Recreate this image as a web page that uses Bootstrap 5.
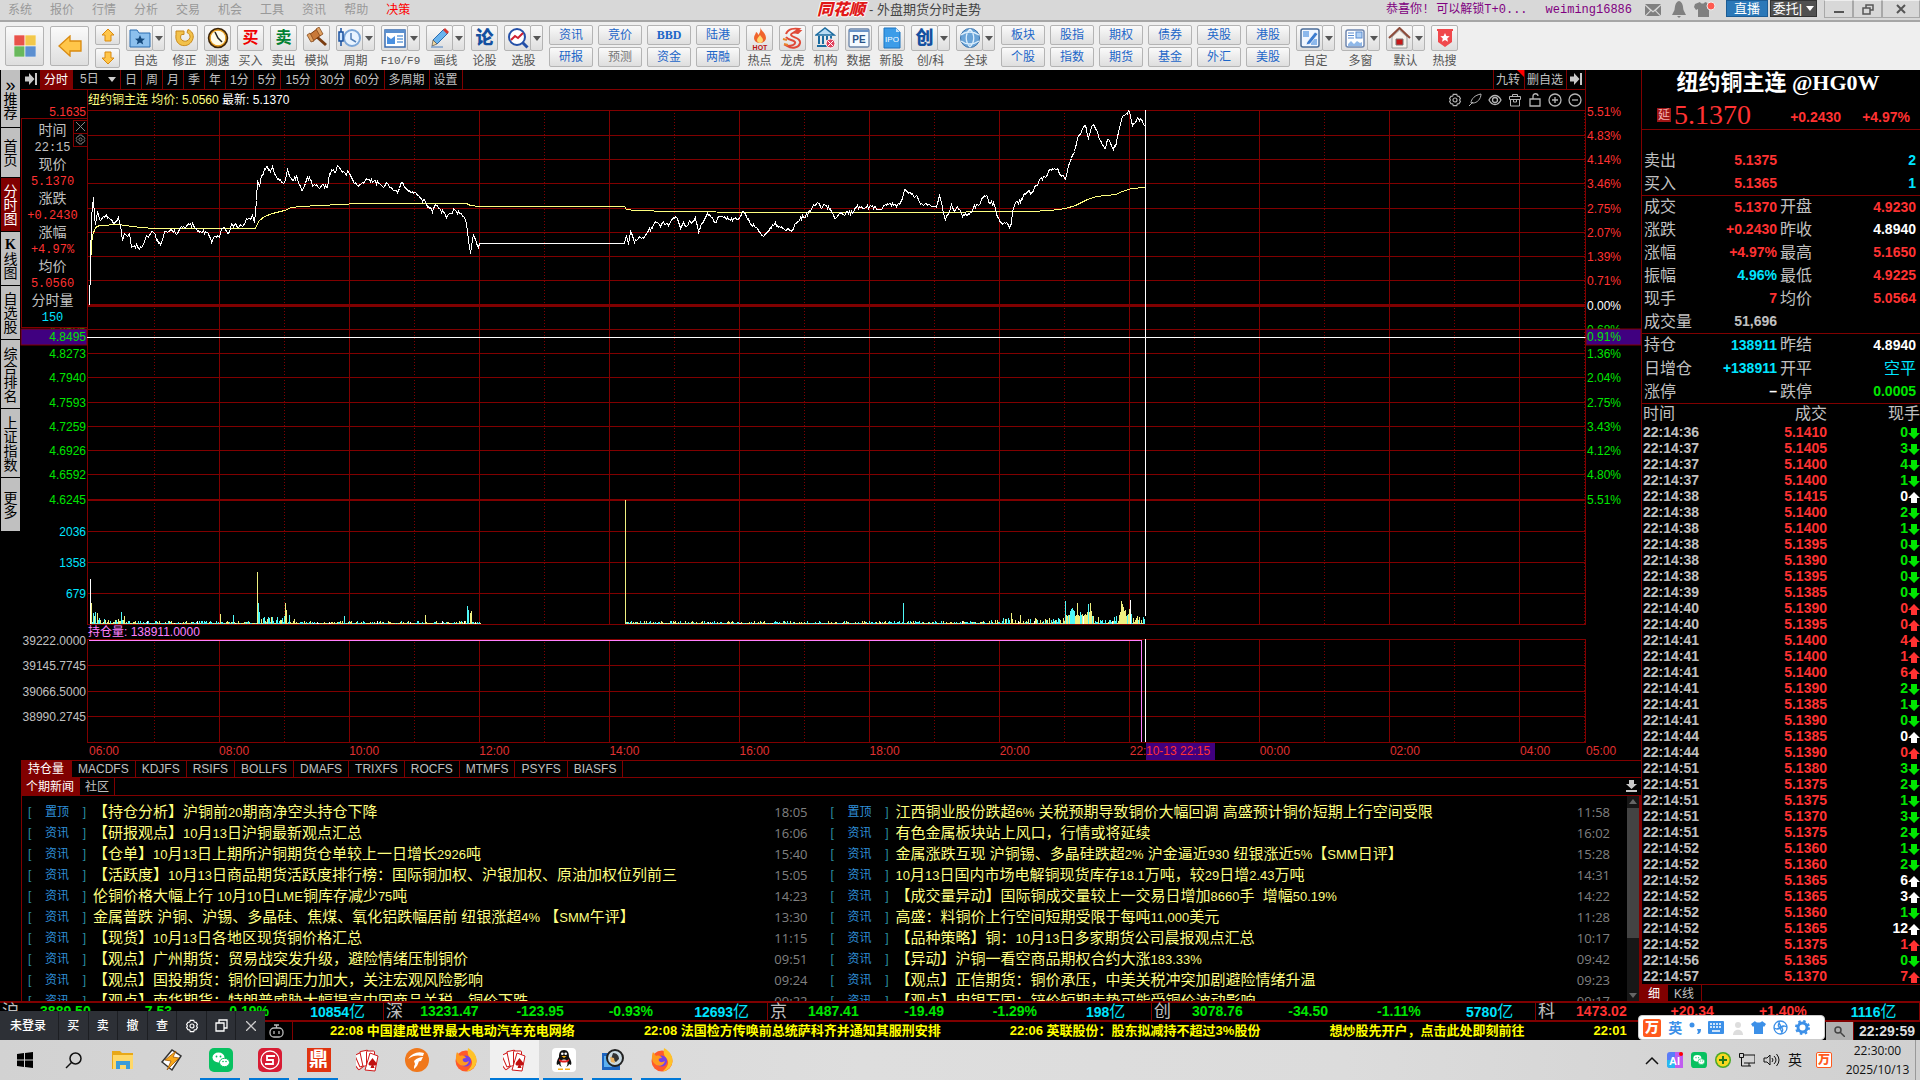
<!DOCTYPE html>
<html lang="zh-CN">
<head>
<meta charset="utf-8">
<meta name="viewport" content="width=device-width, initial-scale=1">
<title>外盘期货分时走势</title>
<link href="https://cdn.jsdelivr.net/npm/bootstrap@5.3.0/dist/css/bootstrap.min.css" rel="stylesheet">
<style>
:root{--line:#800000;--up:#ff3232;--down:#00e600;--cy:#00e5ff;--tx:#c0c0c0}
body{height:100vh;overflow:hidden;background:#000;color:var(--tx);font-family:"Liberation Sans","Noto Sans CJK SC",sans-serif;font-size:12px;line-height:16px}
a{text-decoration:none;color:inherit}
button{font:inherit;color:inherit;background:none;border:0;padding:0;line-height:inherit}
svg{display:block;flex:none}
.up{color:var(--up)}.dn{color:var(--down)}.cy{color:var(--cy)}.wh{color:#fff}
/* title bar */
.titlebar{height:22px;background:#d8d8d8;border-bottom:2px solid #a6a6a6;color:#999;position:relative}
.titlebar .menu{gap:18px;padding-left:8px;line-height:20px}
.caption{left:817px;top:1px;gap:4px;color:#444;font-size:13px;line-height:18px}
.brand{font-weight:900;font-style:italic;font-size:16px;color:#e01818;line-height:18px;text-shadow:1px 0 #fff,-1px 0 #fff,0 1px #fff,0 -1px #fff}
.account{color:#800080;font-family:"Liberation Mono","Noto Sans CJK SC",monospace;gap:18px;line-height:20px}
.btns{gap:2px}
.live{width:42px;height:17px;background:#2b78b8;color:#fff;border:1px solid #1c5c94;font-size:13px;line-height:14px}
.trade{width:47px;height:17px;background:#505050;color:#fff;border:1px solid #333;font-size:13px;line-height:14px;white-space:nowrap}
.winctl{margin-left:5px}
.winctl button{height:18px;border:1px solid #a8a8a8;border-top-color:#eee;display:flex;align-items:center;justify-content:center}
/* toolbar */
.toolbar{height:48px;background:#efefef;padding:3px 5px 0;gap:6px;color:#555}
.tb{border:1px solid #b4b4b4;background:linear-gradient(#fafafa,#dedede);border-radius:2px;display:flex;align-items:center;justify-content:center}
.tool{width:27px}.tool.wide{width:39px}
.tool .tb{height:26px;width:27px}
.tool .drop{width:13px;margin-left:-1px}
.tool .drop::after,.tri{content:"";border:4px solid transparent;border-top:5px solid #555;border-bottom:0}
.tool span.cap{line-height:16px;white-space:nowrap;margin-top:2px}
.big{width:39px;height:40px;margin-top:1px}
.half{width:25px;height:20px}
.pills{display:grid;grid-template-rows:20px 20px;grid-auto-flow:column;gap:2px 5px}
.pills .tb{width:44px;height:20px;color:#1c66c8}
.glyph{font-weight:700;font-size:18px;line-height:22px}
/* side navigation */
.side{width:21px;padding-left:1px;background:#000}
.side a{background:#c0c0c0;color:#000;font-size:14px;line-height:14px;margin-bottom:1px;display:flex;flex-direction:column;align-items:center;justify-content:center;width:19px;height:53px;padding-top:2px}
.side a.s2{height:49px}.side a.s4{height:68px}.side a.first{height:57px}
.side a.on{background:var(--line);color:#fff}
/* period tabs */
.strip a,.strip button{border-right:1px solid var(--line);color:var(--tx);white-space:nowrap}
.strip .on{background:var(--line);color:#fff}
.periods{height:20px;border-bottom:1px solid var(--line);line-height:20px}
.periods a{padding:0 4px;height:19px}
.periods .p5{width:48px;padding:0 4px 0 7px;display:flex;align-items:center;justify-content:space-between}
.legendrow{height:20px;margin-left:66px;border-left:1px solid var(--line);line-height:18px;margin-right:55px;border-right:1px solid var(--line)}
.legendrow .tools{gap:6px;padding-right:3px}
.rightedge{margin-right:55px;border-right:1px solid var(--line)}
.plotwrap{height:633px}
.plotwrap svg.axis{overflow:visible}
.times{height:17px;color:#e03030;margin-left:68px;line-height:17px}
.times span{flex:130 1 0}.times .halfcell{flex:66 1 0}.times .lastcell{flex:none;width:55px}
.stamp{background:#400080;color:#ff3232;left:1125px;top:673px;width:69px;height:17px;line-height:17px}
.indic{height:17px;border-top:1px solid var(--line);line-height:16px}
.indic a{padding:0 6px}
.indic a.on{padding:0 7px}
.newstabs{height:19px;border-top:1px solid var(--line);border-bottom:1px solid var(--line);line-height:18px}
.newstabs a{padding:0 5px}
/* cursor read-out */
.readout{left:0;top:48px;width:67px;height:210px;border:1px solid var(--line);background:#000;font-size:14px;line-height:17px;padding-top:3px;text-align:center;padding-right:4px}
.readout b{display:block;font-weight:400;font-family:"Liberation Mono",monospace;font-size:12px;line-height:18px;height:17px}
.readout .x{right:-1px;width:15px;height:14px;border:1px solid var(--line);display:flex;align-items:center;justify-content:center}
/* news */
.news{border-left:1px solid var(--line);border-right:2px solid var(--line)}
.newscol{width:50%;padding:5px 17px 0 6px}
.item{height:21px;line-height:21px;color:#ffff80;white-space:pre}
.item .tag{color:#2f8fd8;width:65px;display:flex;justify-content:space-between;padding-right:7px;line-height:23px}
.item .tag i{font-style:normal;color:#2a8fa0}
.item a{font-size:15px;color:#ffff80}
.item a i{font-style:normal;font-size:13px}
.item time{color:#808080;font-size:13px;line-height:23px;font-family:"Open Sans",sans-serif}
.sbar{width:12px;background:#171717}
.sbar .thumb{height:130px;background:#434343}
.arr{height:12px;display:flex;align-items:center;justify-content:center}
/* quote panel */
.quote{width:279px;border-left:1px solid var(--line)}
.qname{font:700 22px/26px "Liberation Serif","Noto Sans CJK SC",serif;color:#fff;padding-right:6px}
.qtop{height:60px;border-bottom:1px solid var(--line)}
.qline{padding:4px 0 0 15px}
.late{width:14px;height:14px;background:#a01414;color:#f4b0b0;font-size:12px;line-height:14px;text-align:center}
.last{font:28px/30px "Liberation Serif",serif}
.num{font-size:14px;font-weight:700}
.qline .num{padding-top:4px}
.spacer{height:20px}
.book td{padding:0;height:23px;line-height:23px;font-size:16px}
.book td:nth-child(even){font-size:14px;font-weight:700;text-align:right}
.book td:first-child{width:54px;padding-left:2px}.book td:nth-child(2){width:81px}.book td:nth-child(3){padding-left:3px}.book td:nth-child(4){padding-right:4px}
.book tr.ruled td{border-top:1px solid var(--line);line-height:22px}
.book td.thin{font-size:16px;font-weight:400}
.ticks td{padding:0;height:16px;line-height:16px;font-size:14px;font-weight:700}
.ticks th{padding:0;height:21px;line-height:20px;font-size:16px;font-weight:400}
.ticks tr>:first-child{padding-left:1px;width:100px}.ticks tr>:nth-child(2){text-align:right;width:85px}.ticks tr>:nth-child(3){text-align:right}
.ticks svg{display:inline-block;vertical-align:-2px}
.qtabs{height:17px;border-top:1px solid var(--line);line-height:18px}
.qtabs a{padding:0 7px 0 6px}
/* bottom strips */
.indices{height:21px;border-top:2px solid var(--line);border-bottom:2px solid var(--line);line-height:17px;font-size:14px;font-weight:700}
.indices .seg{border-right:1px solid var(--line);flex:1 1 0}
.indices .nm{width:20px;font-size:17px;font-weight:400;padding-left:2px}
.indices .unit{font-weight:400;font-size:16px}
.wire{height:18px;line-height:18px;color:#ffff00;font-weight:700;font-size:13px;gap:69px;white-space:nowrap;padding-left:330px}
.login{left:0;bottom:40px;height:29px;width:265px;background:#2d3036;color:#fff;font-weight:500}
.login button{flex:1 1 0;border-right:1px solid #1c1e22;display:flex;align-items:center;justify-content:center}
.login button:first-child{flex:0 0 59px;padding-right:2px}
.robot{left:268px;bottom:40px;width:25px;height:18px;border-right:1px solid var(--line)}
.ime{right:95px;bottom:40px;width:187px;height:25px;background:#fff;border:1px solid #ccc;border-radius:4px;color:#3c90e8;font-weight:700;padding:0 14px 0 4px}
.wan{width:18px;height:18px;background:#ff5a1e;color:#fff;font-weight:900;font-size:14px;line-height:17px;text-align:center;border-radius:2px}
.corner{right:0;bottom:40px;height:19px;background:#000;color:#ddd;font-size:14px;font-weight:700;line-height:19px;border-top:1px solid var(--line)}
.corner .find{width:28px;background:#b0b0b0;border-right:1px solid var(--line)}
.taskbar{height:40px;background:linear-gradient(90deg,#d2d2d2,#dedede 45%,#dcdcdc 70%,#d0d0d0);color:#111}
.task{width:49px;height:40px;display:flex;align-items:center;justify-content:center;position:relative}
.task.run::after{content:"";position:absolute;bottom:0;left:4px;right:5px;height:2px;background:#0078d7}
.task.cur{background:#f0f0f0}.task.cur::after{left:0;right:0}
.tray{gap:8px}
.tray .clock{font:12px/19px "Open Sans",sans-serif;width:67px;text-align:center;margin:0 -4px 0 4px}
.sliver{width:5px;height:40px;border-left:1px solid #999}
</style>
<script src="https://cdn.jsdelivr.net/npm/bootstrap@5.3.0/dist/js/bootstrap.bundle.min.js"></script>
</head>
<body class="d-flex flex-column">
<svg width="0" height="0" class="position-absolute">
 <symbol id="gear" viewBox="0 0 16 16"><g fill="none" stroke="currentColor" stroke-width="1.3"><path d="M6 1.5h4l.6 2 2 .3 1.6 2.6-1 1.6 1 1.6-1.6 2.6-2 .3-.6 2H6l-.6-2-2-.3L1.800 9.600l1-1.600-1-1.600L3.400 3.800l2-.3z"/><circle cx="8" cy="8" r="2.300"/></g></symbol>
 <symbol id="end" viewBox="0 0 12 12"><path d="M0 3.500h4V0l5.500 6L4 12V8.500H0zM10 0h2v12h-2z" fill="#c8c8c8"/></symbol>
 <symbol id="bag" viewBox="0 0 24 24"><rect width="24" height="24" rx="5" fill="#07c160"/><ellipse cx="9.500" cy="9.500" rx="6" ry="5" fill="#fff"/><ellipse cx="15.500" cy="14.500" rx="5" ry="4.200" fill="#fff" stroke="#07c160"/><g fill="#07c160"><circle cx="7.500" cy="8.500" r=".9"/><circle cx="11.500" cy="8.500" r=".9"/><circle cx="14" cy="13.500" r=".8"/><circle cx="17" cy="13.500" r=".8"/></g></symbol>
 <symbol id="cards" viewBox="0 0 24 24"><g fill="#fff" stroke="#d01818" stroke-width="1"><rect x="1.500" y="6" width="7" height="12" rx="1" transform="rotate(-38 8 18)"/><rect x="4" y="4" width="7" height="13" rx="1" transform="rotate(-24 9 18)"/><rect x="7" y="2.500" width="8" height="15" rx="1" transform="rotate(-12 11 18)"/><rect x="10.500" y="3" width="8" height="17" rx="1"/><path d="M14 5l8 3-3 15-10-1z"/></g><path d="M16.500 10c2 3 4 4 4 6 0 1.500-2 2-3 1l1 3h-4l1-3c-1 1-3 .5-3-1 0-2 2-3 4-6z" fill="#c01010"/></symbol>
 <symbol id="fox" viewBox="0 0 24 24"><circle cx="12" cy="13" r="10.500" fill="#ff5a2a"/><path d="M14 0c7 4 9 9 8.500 14-1 6-6 9-10 9.500C18 19 20 14 16 10c-2-2-3-6-2-10z" fill="#ffc229"/><circle cx="11.500" cy="13" r="5.500" fill="#7542e5"/><path d="M3 4l3 4c3-1 5 0 6 2-3 0-4 1-3 3 2 2 4 1 6 0-1 5-7 6-10 3C2 14 1 9 3 4z" fill="#ff9a1f"/></symbol>
</svg>

<header class="titlebar d-flex justify-content-between">
 <nav class="menu d-flex"><a href="#">系统</a><a href="#">报价</a><a href="#">行情</a><a href="#">分析</a><a href="#">交易</a><a href="#">机会</a><a href="#">工具</a><a href="#">资讯</a><a href="#">帮助</a><a href="#" class="text-danger-emphasis" id="decide">决策</a></nav>
 <div class="caption position-absolute d-flex"><span class="brand">同花顺</span><span>- 外盘期货分时走势</span></div>
 <div class="btns d-flex align-items-start">
  <div class="account d-flex me-2"><span>恭喜你! 可以解锁T+0...</span><span>weiming16886</span></div>
  <svg width="74" height="19" viewBox="0 0 74 19" class="me-2"><g fill="#808080"><path d="M3 4h16l-8 7zM3 5.500l5 5-5 5zM19 5.500l-5 5 5 5zM4 16l5-5 2 1.500 2-1.500 5 5z"/><path d="M37 1c4 1 4 6 4.500 9L44 15H30l2.500-5c.5-3 .5-8 4.500-9zM35 16h4l-2 2z"/><path d="M53 4l5-2c1 2 4 2 5 0l5 2 3 4-3 2-1-1v8H56V9l-2 1-2-3z"/></g><circle cx="69" cy="6" r="4" fill="#ff5a50" stroke="#eee"/></svg>
  <button class="live">直播</button>
  <button class="trade d-flex align-items-center justify-content-center">委托|<i class="tri ms-1" style="border-top-color:#fff"></i></button>
  <div class="winctl d-flex"><button style="width:29px"><svg width="10" height="10"><path d="M0 7h10v2H0z" fill="#555"/></svg></button><button style="width:29px"><svg width="12" height="11" fill="none" stroke="#555" stroke-width="1.500"><path d="M4 4V1h7v5H8M1 4h7v6H1z"/></svg></button><button style="width:38px"><svg width="10" height="10" stroke="#555" stroke-width="2"><path d="M1 1l8 8M9 1L1 9"/></svg></button></div>
 </div>
</header>

<div class="toolbar d-flex align-items-start">
 <button class="tb big"><svg width="22" height="22" viewBox="0 0 22 22" stroke="#fff" stroke-width=".6"><path d="M0 0h11v11H0z" fill="#e8524a"/><path d="M11 0h11v11H11z" fill="#f2c84b"/><path d="M0 11h11v11H0z" fill="#69b85c"/><path d="M11 11h11v11H11z" fill="#5c8fd0"/></svg></button>
 <button class="tb big"><svg width="24" height="22" viewBox="0 0 24 22"><path d="M1 11L12 1v5h11v10H12v5z" fill="#ffc64a" stroke="#d98a10" stroke-width="1.300"/></svg></button>
 <div class="d-flex flex-column" style="gap:3px"><button class="tb half"><svg width="14" height="14" viewBox="0 0 14 14"><path d="M7 1l6 6H10v6H4V7H1z" fill="#ffc64a" stroke="#d98a10"/></svg></button><button class="tb half"><svg width="14" height="14" viewBox="0 0 14 14"><path d="M7 13l6-6H10V1H4v6H1z" fill="#ffc64a" stroke="#d98a10"/></svg></button></div>
 <div class="tool wide d-flex flex-column align-items-center"><div class="d-flex"><button class="tb"><svg width="22" height="20" viewBox="0 0 22 20"><path d="M1 2h7l2 3h11v14H1z" fill="#8cc0ee" stroke="#2a6cb0"/><path d="M11 7l1.500 3.500 3.500.2-2.700 2.300.9 3.500L11 14.500l-3.200 2 .9-3.500L6 10.700l3.500-.2z" fill="#14487c"/></svg></button><button class="tb drop"></button></div><span class="cap">自选</span></div>
 <div class="tool d-flex flex-column align-items-center"><button class="tb"><svg width="21" height="21" viewBox="0 0 21 21"><path d="M2 3h8v3.500H7.500c-4 6 6 10 8.500 3 .5-2-1-4-3-5l1-3c4 1.500 6 5 5 9-3 11-19 9-17-4z" fill="#f2c14a" stroke="#c98a1c"/></svg></button><span class="cap">修正</span></div>
 <div class="tool d-flex flex-column align-items-center"><button class="tb"><svg width="22" height="22" viewBox="0 0 22 22"><circle cx="11" cy="11" r="9" fill="#fffbe8" stroke="#3c2408" stroke-width="2.500"/><circle cx="11" cy="11" r="8" fill="none" stroke="#eaa020" stroke-width="1.300"/><path d="M8 5l3 6 4 4" fill="none" stroke="#222" stroke-width="1.500"/></svg></button><span class="cap">测速</span></div>
 <div class="tool d-flex flex-column align-items-center"><button class="tb glyph" style="color:#f00000;font-size:16px">买</button><span class="cap">买入</span></div>
 <div class="tool d-flex flex-column align-items-center"><button class="tb glyph" style="color:#008030;font-size:16px">卖</button><span class="cap">卖出</span></div>
 <div class="tool d-flex flex-column align-items-center"><button class="tb"><svg width="22" height="22" viewBox="0 0 22 22"><path d="M11 10l9 8" stroke="#7a3c10" stroke-width="3"/><path d="M3 8l8-6 4 6-8 6z" fill="#c87838" stroke="#7a3c10"/><path d="M1 8l3-2 4 8-3 1zM10 2l3-2 4 7-3 2z" fill="#e0a060" stroke="#7a3c10" stroke-width=".7"/></svg></button><span class="cap">模拟</span></div>
 <div class="tool wide d-flex flex-column align-items-center"><div class="d-flex"><button class="tb"><svg width="23" height="22" viewBox="0 0 23 22"><circle cx="14" cy="11" r="8" fill="#e8f3ff" stroke="#7ba6d8" stroke-width="2"/><path d="M13 6v6l5 3" fill="none" stroke="#5480b8" stroke-width="1.500"/><path d="M3 1v4m0 9v5M1 5h4v9H1z" fill="#cfe6ff" stroke="#1850a0" stroke-width="1.500"/></svg></button><button class="tb drop"></button></div><span class="cap">周期</span></div>
 <div class="tool wide d-flex flex-column align-items-center"><div class="d-flex"><button class="tb"><svg width="22" height="19" viewBox="0 0 22 19"><rect x="1" y="1" width="20" height="17" fill="#fff" stroke="#3a6cb0" stroke-width="1.500"/><path d="M1 1h20v3H1z" fill="#5a90d0"/><path d="M3 7l4 3 4-3v8H3z" fill="#4a90e0"/><path d="M13 7h6m-6 3h6m-6 3h6" stroke="#6aa0dc" stroke-width="1.500"/></svg></button><button class="tb drop"></button></div><span class="cap" style="font-family:'Liberation Mono',monospace;font-size:11px">F10/F9</span></div>
 <div class="tool wide d-flex flex-column align-items-center"><div class="d-flex"><button class="tb"><svg width="22" height="22" viewBox="0 0 22 22"><path d="M4 13L15 2l4 4L8 17z" fill="#6ab4ee" stroke="#2a6cb0"/><path d="M14 3l2-2 4 4-2 2z" fill="#d83830"/><path d="M4 13l4 4-5 2z" fill="#f0d8a0" stroke="#555" stroke-width=".7"/><path d="M2 20h12" stroke="#4a80c0"/></svg></button><button class="tb drop"></button></div><span class="cap">画线</span></div>
 <div class="tool d-flex flex-column align-items-center"><button class="tb glyph" style="color:#1450a0;font-weight:900">论</button><span class="cap">论股</span></div>
 <div class="tool wide d-flex flex-column align-items-center"><div class="d-flex"><button class="tb"><svg width="22" height="22" viewBox="0 0 22 22"><circle cx="10" cy="10" r="8" fill="#fff" stroke="#2450a8" stroke-width="2"/><path d="M15.500 15.500l5 5" stroke="#2450a8" stroke-width="3"/><path d="M4 13l4-4 3 2 5-5" fill="none" stroke="#d02030" stroke-width="2"/></svg></button><button class="tb drop"></button></div><span class="cap">选股</span></div>
 <div class="pills"><button class="tb">资讯</button><button class="tb">研报</button><button class="tb">竞价</button><button class="tb" style="color:#777">预测</button><button class="tb fw-bold" style="font-family:'Liberation Serif',serif">BBD</button><button class="tb">资金</button><button class="tb">陆港</button><button class="tb">两融</button></div>
 <div class="tool d-flex flex-column align-items-center"><button class="tb"><svg width="20" height="23" viewBox="0 0 20 23"><path d="M10 0c1 4 6 6 6 11 0 3-3 5-6 5s-6-2-6-5c0-3 2-4 2-6 2 1 2 2 2 3 2-2 3-5 2-8z" fill="#f0642c"/><path d="M10 8c1 2 3 3 3 5 0 4-6 4-6 0 0-2 2-3 3-5z" fill="#ffd870"/><text x="10" y="23" font-size="7" font-weight="700" text-anchor="middle" fill="#b81414">HOT</text></svg></button><span class="cap">热点</span></div>
 <div class="tool d-flex flex-column align-items-center"><button class="tb"><svg width="21" height="22" viewBox="0 0 21 22" fill="none" stroke="#e04a38" stroke-width="2"><path d="M4 7c2-5 8-6 13-5l-3 2h4l-2 2c-4-1-7 0-7 2 1 3 10 2 9 8-1 5-8 6-13 3 4 0 9-1 8-4-2-3-6-1-9-5"/><path d="M1 12l4 1M2 17l4 1" stroke="#e8842c"/></svg></button><span class="cap">龙虎</span></div>
 <div class="tool d-flex flex-column align-items-center"><button class="tb"><svg width="21" height="22" viewBox="0 0 21 22"><path d="M1 8l9-7 9 7z" fill="#b8dcf4" stroke="#1c6ca0" stroke-width="1.500"/><path d="M4 9v8M8 9v8M12 9v4M16 9v3M2 19h10" stroke="#1c6ca0" stroke-width="2"/><circle cx="15.500" cy="16.500" r="4.500" fill="#e0405c" stroke="#fff"/><path d="M13 14l5 5M18 14l-5 5" stroke="#fff"/></svg></button><span class="cap">机构</span></div>
 <div class="tool d-flex flex-column align-items-center"><button class="tb"><svg width="22" height="20" viewBox="0 0 22 20"><rect x="1" y="1" width="20" height="18" rx="1.500" fill="#f4faff" stroke="#6a84a8" stroke-width="1.300"/><path d="M1 3h20" stroke="#6a94c8" stroke-width="2"/><text x="11" y="15" font-size="10" font-weight="700" text-anchor="middle" fill="#2c5488">PE</text></svg></button><span class="cap">数据</span></div>
 <div class="tool d-flex flex-column align-items-center"><button class="tb"><svg width="18" height="22" viewBox="0 0 18 22"><path d="M1 1h12l4 4v16H1z" fill="#3c9ce8" stroke="#1c74c0"/><path d="M13 1v4h4z" fill="#c0e0fa"/><text x="9" y="15" font-size="8" text-anchor="middle" fill="#fff">IPO</text></svg></button><span class="cap">新股</span></div>
 <div class="tool wide d-flex flex-column align-items-center"><div class="d-flex"><button class="tb glyph" style="color:#1450a0;font-weight:900">创</button><button class="tb drop"></button></div><span class="cap">创/科</span></div>
 <div class="tool wide d-flex flex-column align-items-center"><div class="d-flex"><button class="tb"><svg width="22" height="22" viewBox="0 0 22 22"><circle cx="11" cy="11" r="9.500" fill="#6aa4d8" stroke="#3c74ac"/><path d="M2 8c5-4 12-4 18 0M2 14c5 4 12 4 18 0M11 2c-5 5-5 13 0 18M11 2c5 5 5 13 0 18" fill="none" stroke="#dceefc" stroke-width="1.300"/></svg></button><button class="tb drop"></button></div><span class="cap">全球</span></div>
 <div class="pills"><button class="tb">板块</button><button class="tb">个股</button><button class="tb">股指</button><button class="tb">指数</button><button class="tb">期权</button><button class="tb">期货</button><button class="tb">债券</button><button class="tb">基金</button><button class="tb">英股</button><button class="tb">外汇</button><button class="tb">港股</button><button class="tb">美股</button></div>
 <div class="tool wide d-flex flex-column align-items-center"><div class="d-flex"><button class="tb"><svg width="20" height="20" viewBox="0 0 20 20"><rect x="1" y="1" width="18" height="18" rx="2" fill="#f0f6ff" stroke="#4a6c98" stroke-width="1.500"/><path d="M3 3h6v6H3zM11 11h6v6h-6z" fill="#8cb8ec"/><path d="M7 14L15 4l3 2-8 10-4 1z" fill="#3c7cd0" stroke="#fff" stroke-width=".7"/></svg></button><button class="tb drop"></button></div><span class="cap">自定</span></div>
 <div class="tool wide d-flex flex-column align-items-center"><div class="d-flex"><button class="tb"><svg width="20" height="19" viewBox="0 0 20 19"><rect x="1" y="1" width="18" height="17" rx="2" fill="#fff" stroke="#7088b0" stroke-width="1.500"/><path d="M3 4h6M3 6.500h6M3 9h6" stroke="#5a8cd0"/><rect x="11" y="3" width="6" height="6" fill="#b0d0f4" stroke="#5a8cd0"/><path d="M3 15l3-3 3 3 3-3 3 2 2-1v4H3z" fill="#90b8e8"/></svg></button><button class="tb drop"></button></div><span class="cap">多窗</span></div>
 <div class="tool wide d-flex flex-column align-items-center"><div class="d-flex"><button class="tb"><svg width="23" height="22" viewBox="0 0 23 22"><path d="M4 10v11h15V10l-7.500-7z" fill="#f6f2ec" stroke="#999"/><path d="M1 11L11.500 1 22 11" fill="none" stroke="#8c4a38" stroke-width="2"/><path d="M8 12h7v6H8z" fill="#c81818" stroke="#777"/></svg></button><button class="tb drop"></button></div><span class="cap">默认</span></div>
 <div class="tool d-flex flex-column align-items-center"><button class="tb"><svg width="18" height="20" viewBox="0 0 18 20"><path d="M1 1h16v2H1zM2 3h14v11l-7 5-7-5z" fill="#f0484c"/><path d="M9 5l1.400 3 3.300.3-2.500 2.200.8 3.200L9 12l-3 1.700.8-3.200-2.500-2.200 3.300-.3z" fill="#fff"/></svg></button><span class="cap">热搜</span></div>
</div>

<main class="d-flex flex-fill" style="min-height:0">
 <nav class="side d-flex flex-column flex-shrink-0">
  <a href="#" class="first"><span style="font-size:18px">»</span><span>推</span><span>荐</span></a>
  <a href="#" class="s2"><span>首</span><span>页</span></a>
  <a href="#" class="on"><span>分</span><span>时</span><span>图</span></a>
  <a href="#"><span class="fw-bold" style="font-family:'Liberation Serif',serif">K</span><span>线</span><span>图</span></a>
  <a href="#"><span>自</span><span>选</span><span>股</span></a>
  <a href="#" class="s4"><span>综</span><span>合</span><span>排</span><span>名</span></a>
  <a href="#" class="s4"><span>上</span><span>证</span><span>指</span><span>数</span></a>
  <a href="#"><span>更</span><span>多</span></a>
 </nav>

 <section class="d-flex flex-column flex-fill position-relative" style="min-width:0">
  <div class="rightedge"><div class="periods strip d-flex">
   <button class="px-1" style="border:0;width:19px"><svg width="12" height="12"><use href="#end"/></svg></button>
   <a href="#" class="on px-1" style="width:33px">分时</a><a href="#" class="p5">5日<i class="tri" style="border-top-color:#ccc"></i></a>
   <a href="#">日</a><a href="#">周</a><a href="#">月</a><a href="#">季</a><a href="#">年</a><a href="#">1分</a><a href="#">5分</a><a href="#">15分</a><a href="#">30分</a><a href="#">60分</a><a href="#">多周期</a><a href="#">设置</a>
   <a href="#" class="ms-auto position-relative" style="border-left:1px solid var(--line);padding:0 4px 0 2px">九转<svg width="7" height="7" class="position-absolute top-0 end-0"><path d="M0 0h7v7z" fill="red"/></svg></a><a href="#" style="padding:0 3px 0 2px">删自选</a>
   <button style="border:0;padding:0 3px"><svg width="12" height="12"><use href="#end"/></svg></button>
  </div></div>
  <div class="legendrow d-flex justify-content-between align-items-center">
   <div><span style="color:#ffff80">纽约铜主连 均价: 5.0560</span> <span class="wh">最新: 5.1370</span></div>
   <div class="tools d-flex" style="color:#b4b4b4">
    <svg width="14" height="14"><use href="#gear"/></svg>
    <svg width="14" height="14" fill="none" stroke="currentColor"><path d="M1 13l4-4m-2 1C3 6 7 2 13 1c0 5-4 9-8 9z"/></svg>
    <svg width="14" height="14" fill="none" stroke="currentColor" stroke-width="1.300"><path d="M1 7c3-6 9-6 12 0-3 6-9 6-12 0z"/><circle cx="7" cy="7" r="2.500"/></svg>
    <svg width="14" height="14" fill="none" stroke="currentColor"><path d="M1.500 3.500h11v3h-11zM2.500 7v6h9V7M4.500 3.500v-2h5v2M5.500 6v3h3V6"/></svg>
    <svg width="14" height="14" fill="none" stroke="currentColor" stroke-width="1.300"><path d="M2 6h10v7H2zM5 6V3c0-3 5-3 5 0"/></svg>
    <svg width="14" height="14" fill="none" stroke="currentColor" stroke-width="1.300"><circle cx="7" cy="7" r="6"/><path d="M7 4v6M4 7h6"/></svg>
    <svg width="14" height="14" fill="none" stroke="currentColor" stroke-width="1.300"><circle cx="7" cy="7" r="6"/><path d="M4 7h6"/></svg>
   </div>
  </div>
  <div class="plotwrap d-flex">
   <svg id="axl" class="axis" width="66" height="633" viewBox="21 110 66 633" font-size="12" text-anchor="end"></svg>
   <svg id="plot" class="flex-fill" style="min-width:0;width:1px" height="633" viewBox="87 110 1499 633" preserveAspectRatio="none" shape-rendering="crispEdges"></svg>
   <svg id="axr" class="axis" width="55" height="633" viewBox="1586 110 55 633" font-size="12"></svg>
  </div>
  <div class="times d-flex"><span>06:00</span><span>08:00</span><span>10:00</span><span>12:00</span><span>14:00</span><span>16:00</span><span>18:00</span><span>20:00</span><span>22:00</span><span>00:00</span><span>02:00</span><span class="halfcell">04:00</span><span class="lastcell">05:00</span></div>
  <div class="stamp position-absolute">10-13 22:15</div>
  <div class="position-absolute" style="left:67px;top:554px;color:#ff80ff">持仓量: 138911.0000</div>
  <div class="readout position-absolute"><span class="x position-absolute" style="top:1px"><svg width="9" height="9" stroke="#888"><path d="M0 0l9 9M9 0L0 9"/></svg></span><span class="x position-absolute" style="top:14px;color:#888"><svg width="11" height="11"><use href="#gear"/></svg></span>时间<b>22:15</b>现价<b class="up">5.1370</b>涨跌<b class="up">+0.2430</b>涨幅<b class="up">+4.97%</b>均价<b class="up">5.0560</b>分时量<b class="cy">150</b></div>
  <div class="indic strip d-flex"><a href="#" class="on">持仓量</a><a href="#">MACDFS</a><a href="#">KDJFS</a><a href="#">RSIFS</a><a href="#">BOLLFS</a><a href="#">DMAFS</a><a href="#">TRIXFS</a><a href="#">ROCFS</a><a href="#">MTMFS</a><a href="#">PSYFS</a><a href="#">BIASFS</a></div>
  <div class="newstabs strip d-flex"><a href="#" class="on">个期新闻</a><a href="#">社区</a><button class="ms-auto" style="border:0;padding-right:4px"><svg width="11" height="12"><path d="M3 0h5v4h3L5.500 9 0 4h3zM0 10h11v2H0z" fill="#c8c8c8"/></svg></button></div>
  <div class="news d-flex flex-fill overflow-hidden" style="min-height:0;height:0"><div class="newscol" id="n1"></div><div class="newscol" id="n2"></div>
   <div class="sbar flex-shrink-0 d-flex flex-column"><div class="arr"><svg width="8" height="5"><path d="M0 5l4-5 4 5z" fill="#666"/></svg></div><div class="thumb"></div><div class="arr mt-auto"><svg width="8" height="5"><path d="M0 0l4 5 4-5z" fill="#666"/></svg></div></div></div>
 </section>

 <aside class="quote flex-shrink-0 d-flex flex-column">
  <div class="qtop"><div class="qname text-center">纽约铜主连 @HG0W</div>
   <div class="qline d-flex align-items-center up"><span class="late">延</span><span class="last" style="margin-left:3px">5.1370</span><span class="num ms-auto">+0.2430</span><span class="num" style="margin:0 10px 0 21px">+4.97%</span></div></div>
  <div class="spacer"></div>
  <table class="book w-100"><tbody>
   <tr><td>卖出<td class="up">5.1375<td><td class="cy">2</tr>
   <tr><td>买入<td class="up">5.1365<td><td class="cy">1</tr>
   <tr class="ruled"><td>成交<td class="up">5.1370<td>开盘<td class="up">4.9230</tr>
   <tr><td>涨跌<td class="up">+0.2430<td>昨收<td class="wh">4.8940</tr>
   <tr><td>涨幅<td class="up">+4.97%<td>最高<td class="up">5.1650</tr>
   <tr><td>振幅<td class="cy">4.96%<td>最低<td class="up">4.9225</tr>
   <tr><td>现手<td class="up">7<td>均价<td class="up">5.0564</tr>
   <tr><td>成交量<td>51,696<td><td></tr>
   <tr class="ruled"><td>持仓<td class="cy">138911<td>昨结<td class="wh">4.8940</tr>
   <tr><td>日增仓<td class="cy">+138911<td>开平<td class="cy thin">空平</tr>
   <tr><td>涨停<td class="wh">–<td>跌停<td class="dn">0.0005</tr>
  </tbody></table>
  <table class="ticks w-100" style="border-top:1px solid var(--line)"><thead><tr><th>时间<th>成交<th>现手</tr></thead><tbody id="ticks"></tbody></table>
  <div class="qtabs strip d-flex mt-auto"><a href="#" class="on">细</a><a href="#">K线</a></div>
 </aside>
</main>

<div class="indices d-flex" id="idx"></div>
<div class="wire d-flex overflow-hidden"><span>22:08 中国建成世界最大电动汽车充电网络</span><span>22:08 法国检方传唤前总统萨科齐并通知其服刑安排</span><span>22:06 英联股份：股东拟减持不超过3%股份</span><span>想炒股先开户，点击此处即刻前往</span><span>22:01</span></div>

<div class="login position-absolute d-flex"><button>未登录</button><button>买</button><button>卖</button><button>撤</button><button>查</button><button><svg width="14" height="14"><use href="#gear"/></svg></button><button><svg width="13" height="13" fill="none" stroke="#fff" stroke-width="1.300"><path d="M4 4V1h8v8H9M1 4h8v8H1z"/></svg></button><button style="border:0"><svg width="10" height="10" stroke="#ccc" stroke-width="1.300"><path d="M0 0l10 10M10 0L0 10"/></svg></button></div>
<div class="robot position-absolute"><svg width="17" height="17" fill="none" stroke="#bbb" stroke-width="1.300"><rect x="2" y="6" width="13" height="9" rx="4"/><path d="M8.500 6V3M6 9v3M11 9v3M6 3h5"/></svg></div>
<div class="corner position-absolute d-flex"><button class="find d-flex align-items-center justify-content-center"><svg width="11" height="11" fill="none" stroke="#444" stroke-width="1.500"><circle cx="4" cy="4" r="3"/><path d="M6 6l5 5"/></svg></button><span style="padding:0 5px">22:29:59</span></div>
<div class="ime position-absolute d-flex align-items-center justify-content-between">
 <span class="wan">万</span><span style="font-size:14px">英</span>
 <svg width="12" height="14" fill="#3c90e8"><circle cx="3" cy="4" r="2.500"/><path d="M8 8h4c0 3-1 5-4 5l1-2z"/></svg>
 <svg width="16" height="13"><rect width="16" height="13" rx="1" fill="#3c90e8"/><path d="M2 3h12M2 6h12" stroke="#fff" stroke-width="1.500" stroke-dasharray="2 1"/><path d="M4 10h8" stroke="#fff" stroke-width="1.500"/></svg>
 <svg width="12" height="14" fill="#ddd"><circle cx="6" cy="4" r="3"/><path d="M1 14c0-7 10-7 10 0z"/></svg>
 <svg width="15" height="13" fill="#3c90e8"><path d="M4 0c1 2 6 2 7 0l4 3-2 3-1-1v8H3V5L2 6 0 3z"/></svg>
 <svg width="15" height="15" fill="none" stroke="#3c90e8" stroke-width="1.300"><circle cx="7.500" cy="7.500" r="6.500"/><path d="M7 1c-4 6 0 8 4 5M14 7c-6-3-8 1-5 5M8 14c4-6 0-8-4-5M1 8c6 3 8-1 5-5"/></svg>
 <svg width="15" height="15"><circle cx="7.500" cy="7.500" r="4.500" fill="none" stroke="#3c90e8" stroke-width="3"/><circle cx="7.500" cy="7.500" r="6.500" fill="none" stroke="#3c90e8" stroke-width="2" stroke-dasharray="2.500 2.600"/></svg>
</div>

<footer class="taskbar d-flex justify-content-between flex-shrink-0">
 <div class="d-flex">
  <a href="#" class="task"><svg width="16" height="16"><path d="M0 2l7-1v6.500H0zM8 1l8-1v7.500H8zM0 8.500h7V15l-7-1zM8 8.500h8V16l-8-1z" fill="#000"/></svg></a>
  <a href="#" class="task"><svg width="17" height="17" fill="none" stroke="#111" stroke-width="1.500"><circle cx="10.500" cy="6.500" r="5.500"/><path d="M6.500 10.500L1 16"/></svg></a>
  <a href="#" class="task"><svg width="22" height="20" viewBox="0 0 22 20"><path d="M0 1h8l2 2h11v16H0z" fill="#e8a818"/><path d="M1 5h20v14H1z" fill="#ffd868"/><path d="M4 19v-8h14v8h-4v-4H8v4z" fill="#3c9cd8"/></svg></a>
  <a href="#" class="task"><svg width="24" height="24" viewBox="0 0 24 24"><path d="M2 14L12 2l9 6-9 14z" fill="#fff" stroke="#333" stroke-width="1.500"/><path d="M16 3L5 12l6 1-4 9 12-12-6-1z" fill="#f8a818" stroke="#a05808" stroke-width=".8"/></svg></a>
  <a href="#" class="task run"><svg width="24" height="24"><use href="#bag"/></svg></a>
  <a href="#" class="task run"><svg width="24" height="24" viewBox="0 0 24 24"><rect width="24" height="24" rx="5" fill="#d81c34"/><circle cx="12" cy="12" r="9" fill="none" stroke="#fff" stroke-width="1.300"/><path d="M17 8H9v4h6v4H7" fill="none" stroke="#fff" stroke-width="1.800"/></svg></a>
  <a href="#" class="task run"><span style="width:24px;height:24px;background:#e03410;color:#fff;font-weight:700;font-size:19px;line-height:23px;text-align:center">鼎</span></a>
  <a href="#" class="task"><svg width="24" height="24"><use href="#cards"/></svg></a>
  <a href="#" class="task"><svg width="24" height="24" viewBox="0 0 24 24"><circle cx="12" cy="12" r="12" fill="#f0781c"/><path d="M3 11c4-6 10-8 16-6l-1 3c-5-1-10-1-15 3zM9 13c3-3 6-4 9-4l-2 4c-2 0-4 1-6 3zM9 21c0-4 1-6 5-8-1 3-2 6-5 8z" fill="#fff"/></svg></a>
  <a href="#" class="task"><svg width="24" height="24"><use href="#fox"/></svg></a>
  <a href="#" class="task run cur"><svg width="24" height="24"><use href="#cards"/></svg></a>
  <a href="#" class="task run"><svg width="24" height="24" viewBox="0 0 24 24"><rect width="24" height="24" rx="4" fill="#fff"/><path d="M12 2c4 0 5 3 5 7 2 3 3 6 2 8l-2-1c0 4-10 4-10 0l-2 1c-1-2 0-5 2-8 0-4 1-7 5-7z" fill="#111"/><ellipse cx="12" cy="15.500" rx="3.500" ry="4" fill="#fff"/><path d="M7 11c3 2 7 2 10 0v2c-3 2-7 2-10 0z" fill="#e02020"/><path d="M6 20.500h5v1.500H6zM13 20.500h5v1.500h-5zM9.500 8h5L12 10z" fill="#f8b018"/><circle cx="10.300" cy="5.800" r="1.300" fill="#fff"/><circle cx="13.700" cy="5.800" r="1.300" fill="#fff"/></svg></a>
  <a href="#" class="task run"><svg width="24" height="24" viewBox="0 0 24 24"><path d="M1 5h18v17H1z" fill="#1c64c0"/><path d="M3 8h8v11H3z" fill="#5cb0f0"/><circle cx="14" cy="10" r="8" fill="#c8d8e0" stroke="#222" stroke-width="2"/><path d="M12 5c4 0 6 3 6 6l-3 3-5-3z" fill="#333"/><path d="M9 9l4 1 1 5-4-1z" fill="#e8b060"/></svg></a>
  <a href="#" class="task run"><svg width="24" height="24"><use href="#fox"/></svg></a>
 </div>
 <div class="tray d-flex align-items-center">
  <svg width="14" height="9" fill="none" stroke="#111" stroke-width="1.500"><path d="M1 8l6-6 6 6"/></svg>
  <svg width="16" height="16"><rect width="16" height="16" rx="3" fill="#5a7cf8"/><path d="M8 0h5q3 0 3 3v13H8z" fill="#c05cf0"/><path d="M0 8h8v8H3q-3 0-3-3z" fill="#28b8f0"/><text x="7.500" y="12.500" font-size="11" font-weight="700" text-anchor="middle" fill="#fff">AI</text><circle cx="14" cy="2" r="2" fill="red"/></svg>
  <svg width="16" height="16"><use href="#bag"/></svg>
  <svg width="16" height="16"><circle cx="8" cy="8" r="8" fill="#48a828"/><circle cx="8" cy="8" r="6.500" fill="#f8d820"/><path d="M7 4h2v3h3v2H9v3H7V9H4V7h3z" fill="#207818"/></svg>
  <svg width="16" height="14" fill="none" stroke="#111"><path d="M5 2h11v8H5M.5.500h4v4h-4zM2.500 5v8H12M10 10v3"/></svg>
  <svg width="17" height="14" fill="none" stroke="#111"><path d="M1 5h3l3-3v10L4 9H1zM9 5q2 2 0 4M11 3q4 4 0 8M13.500 1q5 6 0 12"/></svg>
  <span style="font-size:14px">英</span>
  <span class="wan" style="width:16px;height:16px;background:#fff;color:#ff5a1e;border:1px solid #ff5a1e;font-size:12px;line-height:14px;margin-left:6px">万</span>
  <div class="clock">22:30:00<br>2025/10/13</div><span class="sliver"></span>
 </div>
</footer>

<script>
const el = id => document.getElementById(id);
el('decide').className = ''; el('decide').style.color = '#ff0000';

// news lists
const news = {
 n1: [["置顶","【持仓分析】沪铜前20期商净空头持仓下降","18:05"],["资讯","【研报观点】10月13日沪铜最新观点汇总","16:06"],["资讯","【仓单】10月13日上期所沪铜期货仓单较上一日增长2926吨","15:40"],["资讯","【活跃度】10月13日商品期货活跃度排行榜：国际铜加权、沪银加权、原油加权位列前三","15:05"],["资讯","伦铜价格大幅上行 10月10日LME铜库存减少75吨","14:23"],["资讯","金属普跌 沪铜、沪锡、多晶硅、焦煤、氧化铝跌幅居前 纽银涨超4% 【SMM午评】","13:30"],["资讯","【现货】10月13日各地区现货铜价格汇总","11:15"],["资讯","【观点】广州期货：贸易战突发升级，避险情绪压制铜价","09:51"],["资讯","【观点】国投期货：铜价回调压力加大，关注宏观风险影响","09:24"],["资讯","【观点】南华期货：特朗普威胁大幅提高中国商品关税，铜价下跌","09:22"]],
 n2: [["置顶","江西铜业股份跌超6% 关税预期导致铜价大幅回调 高盛预计铜价短期上行空间受限","11:58"],["资讯","有色金属板块站上风口，行情或将延续","16:02"],["资讯","金属涨跌互现 沪铜锡、多晶硅跌超2% 沪金逼近930 纽银涨近5%【SMM日评】","15:28"],["资讯","10月13日国内市场电解铜现货库存18.1万吨，较29日增2.43万吨","14:31"],["资讯","【成交量异动】国际铜成交量较上一交易日增加8660手  增幅50.19%","14:22"],["资讯","高盛：料铜价上行空间短期受限于每吨11,000美元","11:28"],["资讯","【品种策略】铜：10月13日多家期货公司晨报观点汇总","10:17"],["资讯","【异动】沪铜一看空商品期权合约大涨183.33%","09:42"],["资讯","【观点】正信期货：铜价承压，中美关税冲突加剧避险情绪升温","09:23"],["资讯","【观点】申银万国：锌价短期走势可能受铜价波动影响","09:17"]]
};
for (const k in news) el(k).innerHTML = news[k].map(([t,s,h]) =>
 `<div class="item d-flex"><span class="tag flex-shrink-0"><i>[</i><span>${t}</span><i>]</i></span><a href="#">${s.replace(/[0-9A-Z.,%]+/g,'<i>$&</i>')}</a><time class="ms-auto">${h}</time></div>`).join('');

// trade ticks: time, price, volume, direction
const ticks = "14:36 1410 0 d,14:37 1405 3 d,14:37 1400 4 d,14:37 1400 1 d,14:38 1415 0 w,14:38 1400 2 d,14:38 1400 1 d,14:38 1395 0 d,14:38 1390 0 d,14:38 1395 0 d,14:39 1385 0 d,14:40 1390 0 u,14:40 1395 0 u,14:41 1400 4 u,14:41 1400 1 u,14:41 1400 6 u,14:41 1390 2 d,14:41 1385 1 d,14:41 1390 0 d,14:44 1385 0 w,14:44 1390 0 u,14:51 1380 3 d,14:51 1375 2 d,14:51 1375 1 d,14:51 1370 3 d,14:51 1375 2 d,14:52 1360 1 d,14:52 1360 2 d,14:52 1365 6 w,14:52 1365 3 w,14:52 1360 1 d,14:52 1365 12 w,14:52 1375 1 u,14:56 1365 0 d,14:57 1370 7 u";
const cls = {d:'dn',u:'up',w:'wh'};
el('ticks').innerHTML = ticks.split(',').map(r => { const [t,p,v,d] = r.split(' ');
 const path = d=='d' ? 'M3 0h6v5h3L6 11 0 5h3z' : 'M3 11h6V6h3L6 0 0 6h3z';
 return `<tr><td>22:${t}</td><td class="up">5.${p}</td><td class="${cls[d]}">${v}<svg width="12" height="11" fill="currentColor"><path d="${path}"/></svg></td></tr>`}).join('');

// index strip
el('idx').innerHTML = [["沪","3889.50","-7.53","-0.19%","10854"],["深","13231.47","-123.95","-0.93%","12693"],["京","1487.41","-19.49","-1.29%","198"],["创","3078.76","-34.50","-1.11%","5780"],["科","1473.02","+20.34","+1.40%","1116"]].map(([n,a,b,c,v]) => {
 const k = b[0]=='-' ? 'dn' : 'up';
 return `<div class="seg d-flex"><span class="nm">${n}</span>${[a,b,c].map(x=>`<span class="${k} text-center" style="flex:1 1 0">${x}</span>`).join('')}<span class="cy text-center" style="flex:1 1 0">${v}<span class="unit">亿</span></span></div>`}).join('');

// axes
const ys = [110,135,159,183,208,232,256,280,305,329,353,377,402,426,450,474,499];
const left = {110:"5.1635",329:"4.8606",353:"4.8273",377:"4.7940",402:"4.7593",426:"4.7259",450:"4.6926",474:"4.6592",499:"4.6245"};
const pct = ["5.51%","4.83%","4.14%","3.46%","2.75%","2.07%","1.39%","0.71%","0.00%","0.68%","1.36%","2.04%","2.75%","3.43%","4.12%","4.80%","5.51%"];
const T = (x,y,c,s) => `<text x="${x}" y="${y}" fill="${c}">${s}</text>`;
let L = '';
for (const y in left) L += T(86, +y+(y==110?6:5), y==110?'#ff3232':'#00e600', left[y]);
[[531,"2036"],[562,"1358"],[593,"679"]].forEach(([y,s]) => L += T(86,y+5,'#00e5ff',s));
[[640,"39222.0000"],[665,"39145.7745"],[691,"39066.5000"],[716,"38990.2745"]].forEach(([y,s]) => L += T(86,y+5,'#c0c0c0',s));
L += '<rect x="21" y="329" width="66" height="16" fill="#400080" stroke="#800000"/>' + T(86,341,'#00e600','4.8495');
el('axl').innerHTML = L;
let R = ys.map((y,i) => T(1587, y+(i?5:6), i<8?'#ff3232':i==8?'#fff':'#00e600', pct[i])).join('');
R += '<rect x="1586" y="329" width="55" height="16" fill="#400080" stroke="#800000"/>' + T(1587,341,'#00e600','0.91%');
el('axr').innerHTML = R;

// grid
let g = '';
const H = (y,h=1) => g += `<rect x="87" y="${y}" width="1499" height="${h}" fill="#800000"/>`;
ys.forEach(y => y==305 ? H(304,3) : y==499 ? H(499,2) : H(y));
[531,562,593,624,639,665,691,716,742].forEach(y => H(y));
[[110,514],[639,104]].forEach(([y,h]) => {
 g += `<rect x="87" y="${y}" width="1" height="${h}" fill="#800000"/><rect x="1585" y="${y}" width="1" height="${h}" fill="#800000"/>`;
 for (let x=219; x<1585; x+=130) g += `<rect x="${x}" y="${y}" width="1" height="${h}" fill="#800000"/>`;
 for (let x=154; x<1585; x+=130) g += `<path d="M${x}.500 ${y+3}v${h-3}" stroke="#800000" stroke-dasharray="1 2"/>`;
});

// volume bars, one per minute
let seed = 7; const rnd = () => (seed = seed*16807 % 2147483647) / 2147483647;
const spikes = {90:[45,2],91:[21,0],93:[11,1],95:[12,1],97:[11,0],121:[12,1],124:[8,0],220:[10,0],233:[9,1],257:[52,0],258:[21,1],259:[12,1],285:[21,0],286:[14,0],289:[9,1],344:[8,1],425:[9,0],467:[18,1],468:[14,1],470:[11,0],471:[13,0],625:[124,0],903:[21,1],1011:[11,0],1020:[9,0],1065:[23,1],1077:[21,0],1088:[20,1],1090:[21,0],1121:[23,0],1122:[20,0],1123:[17,0],1130:[24,2]};
const col = ['#f0f080','#50f8f8','#ffffff'];
for (let x=90; x<1145; x++) {
 if (x>480 && x<625) continue;
 const busy = (x>1064&&x<1094) || (x>1118&&x<1132);
 let amp = x<100?10 : x<125?5 : (x>256&&x<295)?9 : (x>1064&&x<1145)?8 : x>990?6 : 3;
 let h = Math.max(1, Math.round(amp*Math.pow(rnd(),1.300)) + (busy?8:0)), c = rnd()<(busy?.7:.5)?0:rnd()<.93?1:2;
 if (spikes[x]) [h,c] = spikes[x];
 g += `<rect x="${x}" y="${624-h}" width="1" height="${h}" fill="${col[c]}"/>`;
}

// average and last price
const avg = "90,265 91,245 92,235 95,227 99,225 118,224 125,225 140,227 154,228 255,228 258,221 264,216 272,213 284,210 291,207 300,206 340,204 358,203 466,203 470,205 479,206 624,206 626,209 634,210 672,211 758,212 902,212 1030,211 1050,210 1065,208 1075,205 1087,199 1096,196 1115,194 1122,191 1131,188 1145,187";
const pts = "89,305 90,265 91,217 92,207 93,197 94,217 95,224 97,212 100,220 105,215 111,219 113,223 118,217 120,225 122,240 124,233 127,236 129,233 131,247 136,244 139,249 143,243 146,235 148,237 152,231 154,233 158,243 161,242 164,231 170,229 173,232 177,233 180,227 184,227 188,223 193,225 196,228 200,231 205,231 208,233 211,242 214,236 219,237 221,228 224,227 228,233 231,223 234,224 237,227 240,224 243,225 246,218 250,219 252,215 254,222 256,200 257,180 259,186 261,175 266,166 270,171 272,166 275,175 279,180 283,183 286,174 287,169 290,177 293,180 296,175 299,185 302,190 304,185 307,177 311,180 312,186 314,184 318,187 322,184 327,187 329,173 332,170 335,172 337,165 341,170 344,172 346,175 347,170 351,178 354,183 358,186 362,182 367,179 373,181 379,183 383,187 387,183 392,189 397,192 402,182 405,187 411,192 416,193 421,198 425,202 429,208 432,212 435,204 439,208 443,212 446,217 450,213 454,209 459,213 464,217 466,223 468,240 470,253 473,234 476,243 478,247 479,243 624,243 626,235 628,244 630,231 634,242 637,239 640,237 644,236 647,232 651,227 654,223 657,222 660,226 662,222 668,225 671,219 676,217 679,224 680,228 683,222 686,226 689,220 691,223 695,217 698,232 701,223 704,219 707,213 711,217 715,222 719,216 723,217 729,219 734,218 739,217 743,211 746,216 750,223 754,226 758,230 761,235 766,233 770,227 774,224 779,226 784,229 787,228 792,229 796,223 800,217 804,217 808,212 812,207 817,202 820,207 825,205 829,209 832,213 835,218 839,213 841,212 844,215 847,211 852,213 855,207 861,206 866,207 871,206 879,209 886,205 892,203 896,206 900,202 902,198 904,189 909,192 914,197 916,195 920,204 925,203 930,205 936,207 939,195 941,202 943,213 945,220 946,215 949,212 951,204 954,211 957,206 961,213 964,215 969,214 973,207 979,204 982,197 986,195 990,203 993,202 996,213 999,220 1002,224 1004,222 1009,227 1011,223 1012,210 1015,202 1020,202 1023,195 1028,190 1031,193 1035,185 1037,185 1040,178 1045,177 1048,171 1053,169 1057,168 1060,174 1065,179 1068,165 1071,158 1074,151 1077,138 1080,133 1085,125 1088,138 1091,126 1093,124 1097,131 1100,140 1104,148 1108,139 1110,142 1113,149 1116,142 1119,127 1123,115 1126,113 1129,112 1132,125 1135,122 1138,118 1142,121 1145,126".split(' ').map(p=>p.split(',').map(Number));
let d = `M${pts[0]}`;
for (let i=1; i<pts.length; i++) { const [a,b]=pts[i-1], [x,y]=pts[i];
 if (x-a>2 && x-a<20) for (let m=a+1; m<x; m++) d += `L${m} ${Math.round(b+(y-b)*(m-a)/(x-a)+(rnd()-.5)*4)}`;
 d += `L${x} ${y}`; }
g += `<polyline points="${avg}" fill="none" stroke="#ffff80" transform="translate(.5 .5)"/><path d="${d}" fill="none" stroke="#fff" transform="translate(.5 .5)"/>`;

// open interest and crosshair
g += '<path d="M89 640.500H1141.500V742" fill="none" stroke="#ff80ff"/><path d="M87 337.500H1586M1145.500 110V616M1145.500 639V742" stroke="#fff"/>';
el('plot').innerHTML = g;
</script>
</body>
</html>
